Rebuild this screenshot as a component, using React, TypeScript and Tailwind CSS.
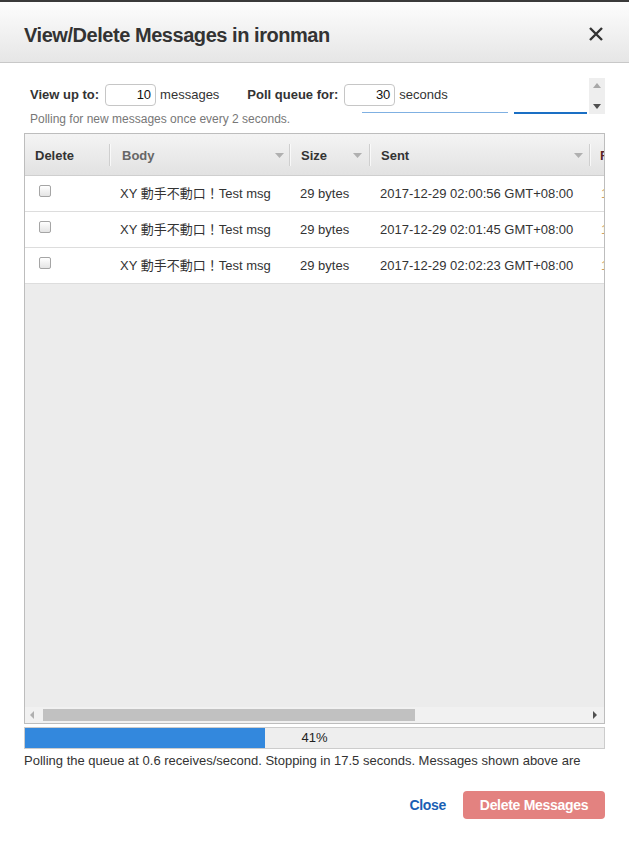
import React from "react";

const rows = [
  "2017-12-29 02:00:56 GMT+08:00",
  "2017-12-29 02:01:45 GMT+08:00",
  "2017-12-29 02:02:23 GMT+08:00",
];

function Arrow() {
  return (
    <svg width="9" height="5" viewBox="0 0 9 5" className="shrink-0">
      <path d="M0 0 L9 0 L4.5 5 Z" fill="#b0b0b0" />
    </svg>
  );
}

function Sep() {
  return <div className="w-[2px] h-[22px] border-l border-[#cfcfcf] bg-white/70 shrink-0" />;
}

export default function App() {
  return (
    <div
      className="w-[629px] h-[844px] bg-white text-[#333] overflow-hidden border-t-2 border-[#3a3a3a]"
      style={{ fontFamily: '"Liberation Sans", Arial, "Noto Sans CJK TC", sans-serif' }}
    >
      {/* Header */}
      <div className="h-[61px] flex items-center justify-between pl-[24px] pr-[25px] bg-gradient-to-b from-[#fdfdfd] to-[#e6e6e6] border-b border-[#c8c8c8]">
        <div className="text-[20px] font-bold tracking-[-0.45px] text-[#333] pt-[5px]">
          View/Delete Messages in ironman
        </div>
        <svg width="16" height="16" viewBox="0 0 16 16" className="mt-[4px]">
          <path d="M2 2 L14 14 M14 2 L2 14" stroke="#333" strokeWidth="2.4" />
        </svg>
      </div>

      <div className="px-[24px] pt-[15px]">
        {/* Controls */}
        <div className="flex items-start">
          <div className="w-[338px] pl-[6px] pt-[6px] shrink-0 whitespace-nowrap">
            <div className="flex items-center h-[22px] text-[13px]">
              <span className="font-bold">View up to:</span>
              <div className="ml-[6px] w-[51px] h-[22px] shrink-0 border border-[#c6c6c6] rounded-[4px] text-right pr-[4px] leading-[20px] text-[#111]">
                10
              </div>
              <span className="ml-[4px]">messages</span>
              <span className="ml-[28px] font-bold">Poll queue for:</span>
              <div className="ml-[6px] w-[51px] h-[22px] shrink-0 border border-[#c6c6c6] rounded-[4px] text-right pr-[4px] leading-[20px] text-[#111]">
                30
              </div>
              <span className="ml-[4px]">seconds</span>
            </div>
            <div className="mt-[5px] text-[12px] leading-[16px] text-[#777]">
              Polling for new messages once every 2 seconds.
            </div>
          </div>
          <div className="flex items-end shrink-0 h-[36px]">
            <div className="w-[146px] h-[1px] bg-[#7fb0e2] mb-[1px]" />
            <div className="ml-[6px] w-[73px] h-[2px] bg-[#1a6fc4]" />
            <div className="ml-[2px] w-[16px] h-[36px] bg-[#eeeeee] flex flex-col items-center justify-between py-[5px]">
              <svg width="8" height="5" viewBox="0 0 8 5">
                <path d="M0 5 L8 5 L4 0 Z" fill="#a8a8a8" />
              </svg>
              <svg width="8" height="5" viewBox="0 0 8 5">
                <path d="M0 0 L8 0 L4 5 Z" fill="#505050" />
              </svg>
            </div>
          </div>
        </div>

        {/* Table */}
        <div className="mt-[6px] w-[581px] h-[591px] border border-[#bdbdbd] flex flex-col overflow-hidden">
          <div className="flex-1 bg-[#ececec] overflow-hidden">
            <div className="w-[700px]">
              {/* header */}
              <div className="h-[42px] flex items-center bg-gradient-to-b from-[#f4f4f4] to-[#e2e2e2] border-b border-[#cfcfcf] text-[13px] font-bold">
                <div className="w-[84px] pl-[10px] pt-[2px]">Delete</div>
                <Sep />
                <div className="w-[178px] pl-[11px] pr-[5px] pt-[2px] flex items-center justify-between text-[#666]">
                  <span>Body</span>
                  <Arrow />
                </div>
                <Sep />
                <div className="w-[78px] pl-[10px] pr-[7px] pt-[2px] flex items-center justify-between">
                  <span>Size</span>
                  <Arrow />
                </div>
                <Sep />
                <div className="w-[218px] pl-[10px] pr-[6px] pt-[2px] flex items-center justify-between">
                  <span>Sent</span>
                  <Arrow />
                </div>
                <Sep />
                <div className="pl-[9px] pt-[2px] text-[#5a2626] whitespace-nowrap">Receive Count</div>
              </div>
              {/* rows */}
              {rows.map((sent) => (
                <div
                  key={sent}
                  className="h-[36px] flex bg-white border-b border-[#dddddd] text-[13px]"
                >
                  <div className="w-[95px] pl-[14px] pt-[9px]">
                    <div className="w-[12px] h-[12px] rounded-[2px] border border-[#a5a5a5] bg-gradient-to-b from-white to-[#e4e4e4]" />
                  </div>
                  <div className="w-[180px] pt-[10px] leading-[16px]">XY 動手不動口！Test msg</div>
                  <div className="w-[80px] pt-[10px] leading-[16px]">29 bytes</div>
                  <div className="w-[221px] pt-[10px] leading-[16px]">{sent}</div>
                  <div className="pt-[10px] leading-[16px] text-[#d0a060]">1</div>
                </div>
              ))}
            </div>
          </div>
          {/* horizontal scrollbar */}
          <div className="h-[16px] bg-[#f1f1f1] flex items-center px-[5px]">
            <svg width="4" height="8" viewBox="0 0 4 8" className="shrink-0">
              <path d="M4 0 L4 8 L0 4 Z" fill="#b0b0b0" />
            </svg>
            <div className="ml-[9px] w-[372px] h-[12px] bg-[#c1c1c1]" />
            <div className="flex-1" />
            <svg width="4" height="8" viewBox="0 0 4 8" className="shrink-0 mr-[2px]">
              <path d="M0 0 L0 8 L4 4 Z" fill="#505050" />
            </svg>
          </div>
        </div>

        {/* Progress */}
        <div className="mt-[3px] relative w-[581px] h-[22px] border border-[#cccccc] bg-[#eeeeee]">
          <div className="h-full w-[240px] bg-[#3388dd]" />
          <div className="absolute inset-0 flex items-center justify-center text-[13px] text-[#222]">
            41%
          </div>
        </div>

        <div className="mt-[4px] text-[13px] leading-[16px] h-[16px] overflow-hidden w-[581px] text-[#333]">
          Polling the queue at 0.6 receives/second. Stopping in 17.5 seconds. Messages shown above are
          available to other applications at the end of the polling period.
        </div>

        {/* Buttons */}
        <div className="mt-[22px] flex items-center justify-end">
          <span className="text-[14px] font-bold text-[#1a5fb4] tracking-[-0.3px]">Close</span>
          <div className="ml-[17px] w-[142px] h-[28px] rounded-[4px] bg-[#e38280] flex items-center justify-center text-white text-[14px] font-bold tracking-[-0.3px]">
            Delete Messages
          </div>
        </div>
      </div>
    </div>
  );
}
